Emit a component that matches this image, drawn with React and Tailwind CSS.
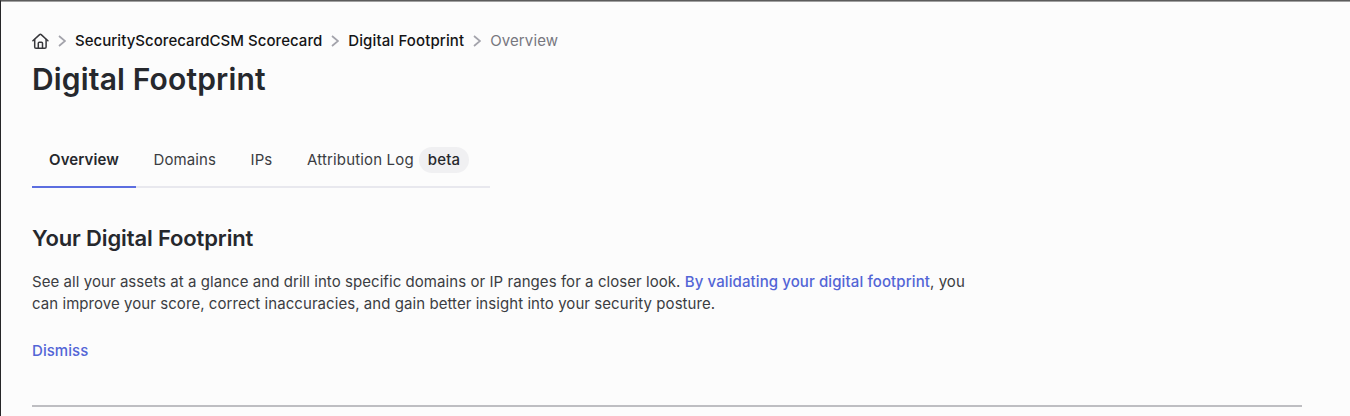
import React from "react";

const tabs = [
  { label: "Overview", active: true },
  { label: "Domains" },
  { label: "IPs" },
  { label: "Attribution Log", badge: "beta" },
];

const HomeIcon = () => (
  <svg width="17" height="17" viewBox="0 0 17 17" fill="none" stroke="#38383c" strokeWidth="1.5" strokeLinejoin="round" strokeLinecap="round">
    <path d="M0.9 7.8 L7.6 1.6 Q8.4 0.9 9.2 1.6 L15.9 7.8" />
    <path d="M2.7 6.6 V14 Q2.7 15.3 4 15.3 H12.8 Q14.1 15.3 14.1 14 V6.6" />
    <path d="M6.3 15.2 V10.2 Q6.3 9.2 7.3 9.2 H9.5 Q10.5 9.2 10.5 10.2 V15.2" />
  </svg>
);

const Separator = () => (
  <svg className="shrink-0" width="8" height="12" viewBox="0 0 8 12" fill="none" stroke="#a3a3ab" strokeWidth="1.7">
    <path d="M1 1 L7 6 L1 11" />
  </svg>
);

const App = () => {
  return (
    <div className="h-[416px] overflow-hidden border-t border-l border-t-[#5c5c5c] border-l-[#262628] bg-[#fcfcfc] font-['Inter',sans-serif] text-[#26282d]">
      <div className="flex flex-col border-t border-t-[#a0a0a0] pl-[31px] pr-12 whitespace-nowrap">
        <nav className="mt-[28px] flex h-[22px] items-center text-[15px] font-medium tracking-[0.04px] text-[#141416]">
          <HomeIcon />
          <div className="ml-[9px]"><Separator /></div>
          <a className="ml-[9px]">SecurityScorecardCSM Scorecard</a>
          <div className="ml-[9px]"><Separator /></div>
          <a className="ml-[9px] tracking-[0.12px]">Digital Footprint</a>
          <div className="ml-[9px]"><Separator /></div>
          <span className="ml-[9px] font-normal tracking-[0.12px] text-[#77777f]">Overview</span>
        </nav>
        <h1 className="mt-[7px] h-10 text-[30px] leading-10 font-semibold tracking-[0.16px]">Digital Footprint</h1>

        <div className="mt-[34px] flex h-[55px] w-[458px] border-b-2 border-[#e8e8ee] text-[15px] tracking-[0.1px]">
          {tabs.map((tab) => (
            <button
              key={tab.label}
              className={
                tab.active
                  ? "-mb-[2px] flex items-center border-b-2 border-[#5c6ee0] px-[17px] pt-[2px] font-semibold"
                  : "flex items-center pr-[17px] pl-[17.6px] pt-[2px] text-[#3b3d42]"
              }
            >
              <span className={tab.badge ? "tracking-[0.16px]" : ""}>{tab.label}</span>
              {tab.badge && (
                <span className="-mt-px ml-[5px] flex h-[26px] items-center rounded-full bg-[#f0f0f2] px-[9px] pt-px font-medium tracking-[0.15px] text-[#26282d]">{tab.badge}</span>
              )}
            </button>
          ))}
        </div>

        <h2 className="mt-[35px] h-[30px] text-[22px] leading-[30px] font-semibold tracking-[-0.13px]">Your Digital Footprint</h2>
        <p className="mt-[18px] text-[15px] leading-[22px] tracking-[0.06px] text-[#3b3d42]">
          See all your assets at a glance and drill into specific domains or IP ranges for a closer look.{" "}
          <a className="font-medium tracking-[0.1px] text-[#5365d6]">By validating your digital footprint</a>, you
          <br />
          can improve your score, correct inaccuracies, and gain better insight into your security posture.
        </p>
        <button className="mt-[25px] h-[22px] self-start text-[15px] leading-[22px] font-medium tracking-[0.06px] text-[#5365d6]">Dismiss</button>
        <div className="mt-[43px] h-[2px] bg-[#bebec2]" />
      </div>
    </div>
  );
};

export default App;
